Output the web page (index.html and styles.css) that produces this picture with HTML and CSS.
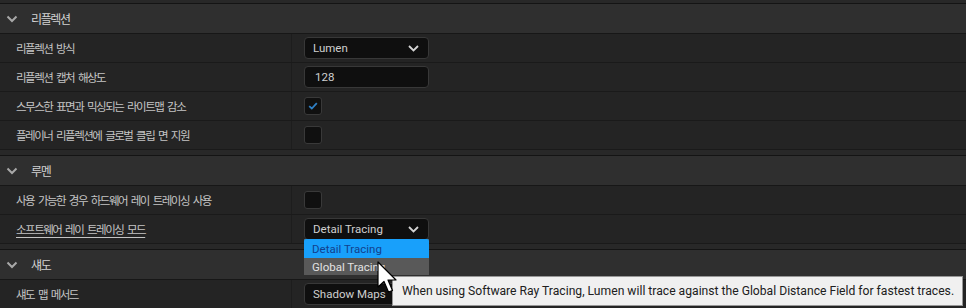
FILE: index.html
```html
<!DOCTYPE html>
<html lang="ko">

<head>
    <meta charset="UTF-8">
    <meta name="viewport" content="width=device-width, initial-scale=1.0">
    <title>Details</title>
    <link rel="stylesheet" href="styles.css">
</head>

<body>
    <div class="panel">
        <section class="category">
            <div class="cat-head">
                <svg class="cat-arrow" width="12" height="8" viewBox="0 0 12 8"><polyline points="1.5,1.5 6,6 10.5,1.5" /></svg>
                <span>리플렉션</span>
            </div>
            <div class="row">
                <div class="label">리플렉션 방식</div>
                <div class="value">
                    <div class="combo"><span>Lumen</span>
                        <svg class="combo-arrow" width="11" height="7" viewBox="0 0 11 7"><polyline points="1,1 5.5,5.5 10,1" /></svg>
                    </div>
                </div>
            </div>
            <div class="row">
                <div class="label">리플렉션 캡처 해상도</div>
                <div class="value">
                    <div class="field">128</div>
                </div>
            </div>
            <div class="row">
                <div class="label">스무스한 표면과 믹싱되는 라이트맵 감소</div>
                <div class="value">
                    <div class="check">
                        <svg width="10" height="8" viewBox="0 0 10 8"><polyline points="1.2,4.2 3.8,6.5 8.8,1.2" /></svg>
                    </div>
                </div>
            </div>
            <div class="row">
                <div class="label">플레이너 리플렉션에 글로벌 클립 면 지원</div>
                <div class="value">
                    <div class="check"></div>
                </div>
            </div>
        </section>

        <section class="category">
            <div class="cat-head">
                <svg class="cat-arrow" width="12" height="8" viewBox="0 0 12 8"><polyline points="1.5,1.5 6,6 10.5,1.5" /></svg>
                <span>루멘</span>
            </div>
            <div class="row">
                <div class="label">사용 가능한 경우 하드웨어 레이 트레이싱 사용</div>
                <div class="value">
                    <div class="check"></div>
                </div>
            </div>
            <div class="row">
                <div class="label"><span class="hovered">소프트웨어 레이 트레이싱 모드</span></div>
                <div class="value">
                    <div class="combo"><span>Detail Tracing</span>
                        <svg class="combo-arrow" width="11" height="7" viewBox="0 0 11 7"><polyline points="1,1 5.5,5.5 10,1" /></svg>
                        <div class="menu">
                            <div class="menu-item selected">Detail Tracing</div>
                            <div class="menu-item hover">Global Tracing</div>
                        </div>
                    </div>
                </div>
            </div>
        </section>

        <section class="category">
            <div class="cat-head">
                <svg class="cat-arrow" width="12" height="8" viewBox="0 0 12 8"><polyline points="1.5,1.5 6,6 10.5,1.5" /></svg>
                <span>섀도</span>
            </div>
            <div class="row">
                <div class="label">섀도 맵 메서드</div>
                <div class="value">
                    <div class="combo"><span>Shadow Maps</span>
                        <svg class="combo-arrow" width="11" height="7" viewBox="0 0 11 7"><polyline points="1,1 5.5,5.5 10,1" /></svg>
                    </div>
                </div>
            </div>
        </section>

        <div class="tooltip">When using Software Ray Tracing, Lumen will trace against the Global Distance Field for fastest traces.</div>

        <svg class="cursor" width="22" height="34" viewBox="0 0 22 34">
            <path d="M1,1 L1,26 L7,20.5 L11.5,31 L15.5,29.5 L11,19 L19,19 Z" />
        </svg>
    </div>
</body>

</html>
```

FILE: styles.css
```css
body {
    margin: 0;
    background: #262626;
    font-family: Roboto, "Noto Sans CJK KR", sans-serif;
    overflow: hidden;
}

.panel {
    position: relative;
    height: 308px;
    padding-top: 3px;
    box-sizing: border-box;
    background: #282828;
}

.category {
    border-top: 1px solid #141414;
}

.category + .category {
    margin-top: 5px;
}

.cat-head {
    height: 29px;
    display: flex;
    align-items: center;
    gap: 13px;
    padding-left: 6px;
    background: #2f2f2f;
    border-bottom: 1px solid #171717;
    color: #d2d2d2;
    font-family: "Noto Sans CJK KR", sans-serif;
    font-size: 12px;
    letter-spacing: -1.4px;
}

.cat-arrow polyline {
    fill: none;
    stroke: #a8a8a8;
    stroke-width: 2;
}

.row {
    height: 28px;
    display: grid;
    grid-template-columns: 292px 1fr;
    background: #242424;
    border-bottom: 1px solid #1a1a1a;
}

.label {
    display: flex;
    align-items: center;
    padding-left: 16px;
    border-right: 1px solid #1d1d1d;
    color: #c4c4c4;
    font-family: "Noto Sans CJK KR", sans-serif;
    font-size: 11.5px;
    letter-spacing: -1.5px;
    word-spacing: 2px;
    white-space: nowrap;
}

.hovered {
    text-decoration: underline;
    text-underline-offset: 3px;
}

.value {
    display: flex;
    align-items: center;
    padding-left: 12px;
}

.combo,
.field {
    position: relative;
    width: 125px;
    height: 22px;
    box-sizing: border-box;
    display: flex;
    align-items: center;
    justify-content: space-between;
    padding: 0 9px 0 8px;
    background: #0f0f0f;
    border: 1px solid #383838;
    border-radius: 4px;
    color: #cfcfcf;
    font-size: 11.5px;
}

.field {
    padding-left: 10px;
}

.combo-arrow polyline {
    fill: none;
    stroke: #d4d4d4;
    stroke-width: 1.8;
}

.check {
    width: 18px;
    height: 18px;
    box-sizing: border-box;
    display: flex;
    align-items: center;
    justify-content: center;
    background: #101010;
    border: 1px solid #393939;
    border-radius: 3px;
}

.check polyline {
    fill: none;
    stroke: #2f80c6;
    stroke-width: 1.8;
}

.menu {
    position: absolute;
    top: 100%;
    left: -1px;
    width: 125px;
    z-index: 2;
    background: #585858;
}

.menu-item {
    height: 18px;
    display: flex;
    align-items: center;
    padding-left: 8px;
    font-size: 11.5px;
    color: #e2e2e2;
}

.menu-item.selected {
    height: 19px;
    background: #18a0fb;
    color: #12408e;
    border-radius: 2px 2px 0 0;
}

.menu-item.hover {
    height: 17px;
    background: #595959;
}

.tooltip {
    position: absolute;
    left: 392px;
    top: 276px;
    width: 571px;
    height: 30px;
    box-sizing: border-box;
    display: flex;
    align-items: center;
    padding-left: 9px;
    z-index: 3;
    background: #f0f0f0;
    border: 1px solid #979797;
    color: #202020;
    font-size: 12.15px;
    white-space: nowrap;
}

.cursor {
    position: absolute;
    left: 377px;
    top: 261px;
    z-index: 4;
}

.cursor path {
    fill: #ffffff;
    stroke: #000000;
    stroke-width: 1.2;
    stroke-linejoin: round;
}
```
